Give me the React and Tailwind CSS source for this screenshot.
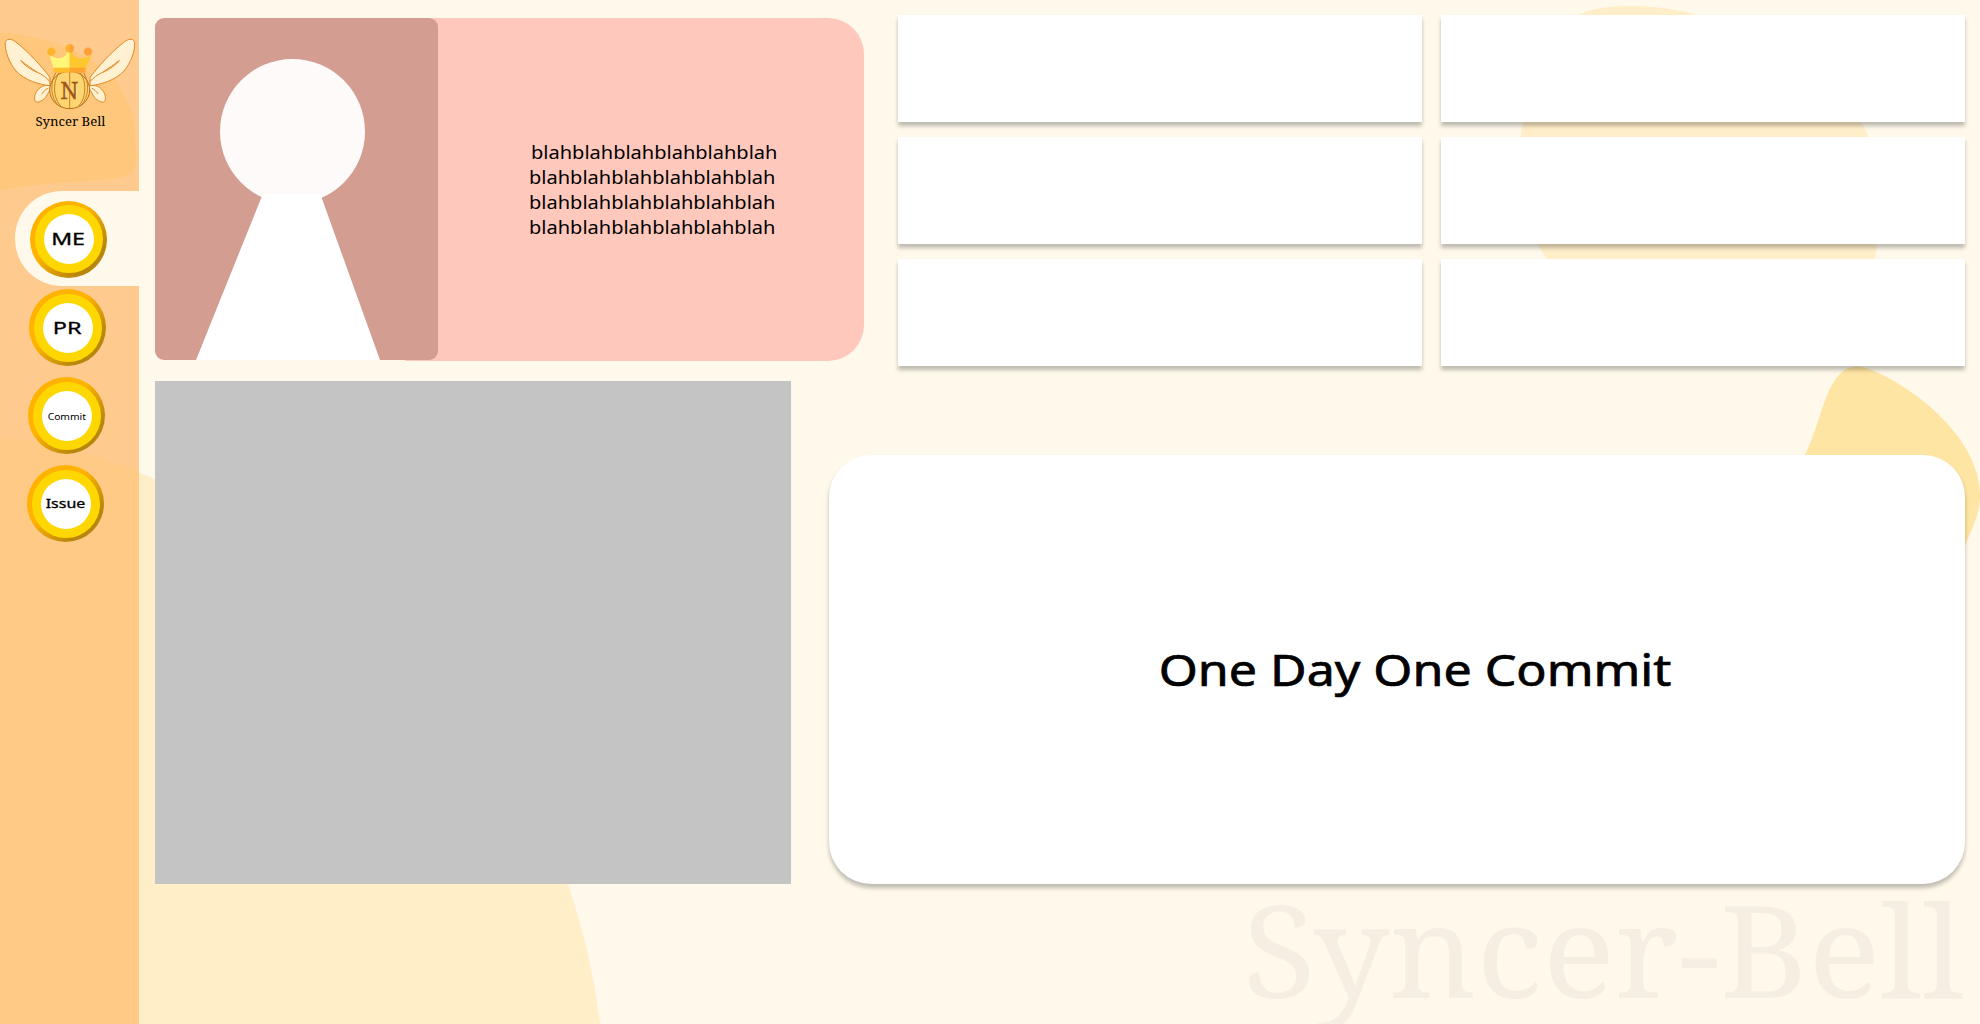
const navItems = [
  { label: 'ME', active: true, shift: 'ml-[30px]', text: 'text-[16.5px] scale-x-[1.4] [-webkit-text-stroke:0.3px_black]' },
  { label: 'PR', active: false, shift: 'ml-[29px]', text: 'text-[16.5px] scale-x-[1.42] [-webkit-text-stroke:0.3px_black]' },
  { label: 'Commit', active: false, shift: 'ml-[28px]', text: 'text-[9px] scale-x-[1.14]' },
  { label: 'Issue', active: false, shift: 'ml-[27px]', text: 'text-[12.5px] scale-x-[1.28] [-webkit-text-stroke:0.3px_black]' },
];

const lines = ['ml-[2px]', '', '', ''];

function Backdrop() {
  return (
    <svg className="absolute inset-0 h-full w-full" viewBox="0 0 1980 1024" aria-hidden="true">
      <path fill="#ffeec8" d="M-5 438C50 441 100 455 139 472.5C350 560 500 700 568 884Q592 955 600 1024H-5Z" />
      <path fill="#ffeec8" d="M1581 14C1600 4 1650 3 1694 14C1760 30 1830 70 1861 122C1885 165 1882 210 1877 244C1874 270 1870 285 1850 300C1750 330 1600 330 1547 259C1520 220 1512 180 1523 122C1527 70 1545 30 1581 14Z" />
      <path fill="#ffe5a3" d="M1805 455C1823 420 1826 367 1857 366.5C1880 366 1980 425 1980 495C1980 515 1971 530 1965 546V600H1805Z" />
    </svg>
  );
}

function SidebarBackdrop() {
  return (
    <svg className="absolute inset-0 h-full w-full" viewBox="0 0 139 1024" aria-hidden="true">
      <path fill="#ffc77c" d="M0 32.5C60 36 100 62 115 80C134 105 136 130 136 157C136 175 125 178 110 179C80 182 40 183 0 190Z" />
      <path fill="#ffc986" d="M0 438.5C50 441 100 455 139 472.5V1024H0Z" />
    </svg>
  );
}

function Wing() {
  return (
    <g fill="#fff1d2" stroke="#e08a25" strokeWidth="3" strokeLinejoin="round" strokeLinecap="round">
      <path d="M149 152C132 149 122 155 113 165C104 176 101 190 106 199C114 206 128 196 137 187C143 177 148 166 154 160Z" />
      <path d="M149 126C128 98 84 48 46 20C33 10 18 10 16 23C14 48 28 84 48 108C74 136 118 149 149 152Z" />
      <path fill="none" d="M62 76C70 90 92 103 112 112C128 119 140 128 150 140M66 79C76 88 92 98 112 112M126 176C132 168 138 162 144 160" />
    </g>
  );
}

function Logo() {
  return (
    <svg className="block h-[75px] w-[139px]" viewBox="0 0 417 225" role="img" aria-label="Winged bell with crown">
      <Wing />
      <g transform="translate(420 0) scale(-1 1)">
        <Wing />
      </g>
      <ellipse cx="209" cy="165" rx="60" ry="56" fill="#ffd571" stroke="#b86f16" strokeWidth="3" />
      <g fill="none" stroke="#b86f16" strokeWidth="2.5">
        <path d="M209 108V220" />
        <path d="M168 112C150 140 150 188 176 212M178 112C158 140 158 190 184 215" />
        <path d="M250 112C268 140 268 188 242 212M240 112C260 140 260 190 234 215" />
      </g>
      <text x="211" y="193" textAnchor="middle" fontSize="72" fill="#ffefc0" className="font-['Noto_Serif',serif]">N</text>
      <text x="208" y="191" textAnchor="middle" fontSize="72" fill="#a3560f" stroke="#a3560f" className="font-['Noto_Serif',serif]">N</text>
      <path fill="#fff67a" d="M209 48H202C200 60 194 67 182 69C170 71 158 67 148 60L161 100H209Z" />
      <path fill="#ffc72f" d="M209 48H216C218 60 224 67 236 69C248 71 262 67 275 60L257 100H209Z" />
      <path fill="#ffbd2c" d="M161 98H209V113H161Z" />
      <path fill="#ffa52f" d="M209 98H257V113H209Z" />
      <circle cx="154" cy="50" r="12.5" fill="#ffb52b" />
      <circle cx="264" cy="50" r="12.5" fill="#ffa136" />
      <path fill="#ffb52b" d="M209 27A13 13 0 0 0 209 53Z" />
      <path fill="#ffa136" d="M209 27A13 13 0 0 1 209 53Z" />
    </svg>
  );
}

function CoinButton({ item }) {
  return (
    <button
      className={`flex size-[77px] shrink-0 items-center justify-center rounded-full bg-[linear-gradient(135deg,#ffb300_0%,#ffb300_42%,#b8860b_78%)] ${item.shift}`}
    >
      <span className="flex size-[68px] items-center justify-center rounded-full bg-[#ffd700]">
        <span className="flex size-[50px] items-center justify-center rounded-full bg-white">
          <span className={`inline-block pt-px leading-none ${item.text}`}>{item.label}</span>
        </span>
      </span>
    </button>
  );
}

function Sidebar() {
  return (
    <aside className="relative h-full w-[139px] shrink-0 bg-[#ffca8e]">
      <SidebarBackdrop />
      <div className="relative flex flex-col">
        <div className="h-[191px] pt-[35px]">
          <Logo />
          <p className="pt-px pl-[2px] text-center font-['Noto_Serif',serif] text-[13.2px] leading-[21px]">Syncer Bell</p>
        </div>
        <nav className="flex flex-col">
          {navItems.map((item) =>
            item.active ? (
              <div key={item.label} className="ml-[15px] flex h-[95px] items-center rounded-l-[47px] bg-[#fff9eb]">
                <div className="-ml-[15px] pt-px">
                  <CoinButton item={item} />
                </div>
              </div>
            ) : (
              <div key={item.label} className="flex h-[88px] items-start pt-[3px]">
                <CoinButton item={item} />
              </div>
            )
          )}
        </nav>
      </div>
    </aside>
  );
}

function Profile() {
  return (
    <section className="flex h-[343px] w-[709px] rounded-l-[9px] rounded-r-[36px] bg-[linear-gradient(90deg,transparent_250px,#ffc8bc_250px)]">
      <div className="h-[342px] w-[283px] shrink-0 overflow-hidden rounded-[9px] bg-[#d39d91]">
        <svg className="block h-[342px] w-[283px]" viewBox="0 0 283 342" aria-hidden="true">
          <circle cx="137.5" cy="113.5" r="72.5" fill="#fffafa" />
          <path fill="#fff" d="M109 176H165Q166 176 166 178L225 342H41L107 178Q108 176 109 176Z" />
        </svg>
      </div>
      <div className="pt-[122px] pl-[91px] text-[18px] leading-[25px]">
        {lines.map((shift, i) => (
          <p key={i} className={shift}>
            <span className="inline-block origin-left scale-x-[1.112]">blahblahblahblahblahblah</span>
          </p>
        ))}
      </div>
    </section>
  );
}

export default function App() {
  return (
    <div className="relative flex h-[1024px] w-[1980px] overflow-hidden bg-[#fff9eb] font-['Noto_Sans',sans-serif] text-black">
      <Backdrop />
      <Sidebar />
      <main className="relative flex flex-1 flex-col pl-4">
        <div className="flex h-[884px]">
          <div className="flex w-[709px] shrink-0 flex-col gap-5 pt-[18px]">
            <Profile />
            <div className="h-[503px] w-[636px] bg-[#c4c4c4]" />
          </div>
          <div className="flex flex-1 flex-col pt-[15px]">
            <div className="ml-[34px] grid w-[1067px] grid-cols-2 gap-x-[19px] gap-y-[15px]">
              {[0, 1, 2, 3, 4, 5].map((i) => (
                <div key={i} className="h-[107px] bg-white shadow-[0_4px_4px_rgba(0,0,0,0.25)]" />
              ))}
            </div>
            <div className="mt-[89px] -ml-[35px] flex h-[429px] w-[1136px] items-center justify-center rounded-[42px] bg-white shadow-[0_4px_4px_rgba(0,0,0,0.25)]">
              <h1 className="ml-[37px] scale-x-[1.165] text-[43px] leading-none whitespace-nowrap [-webkit-text-stroke:0.7px_black]">
                One Day One Commit
              </h1>
            </div>
          </div>
        </div>
        <div className="flex h-[140px] justify-end pr-[16px]">
          <span className="origin-right scale-x-[1.053] font-['Noto_Serif',serif] text-[128px] leading-[130px] text-[#f7eee3]">
            Syncer-Bell
          </span>
        </div>
      </main>
    </div>
  );
}
